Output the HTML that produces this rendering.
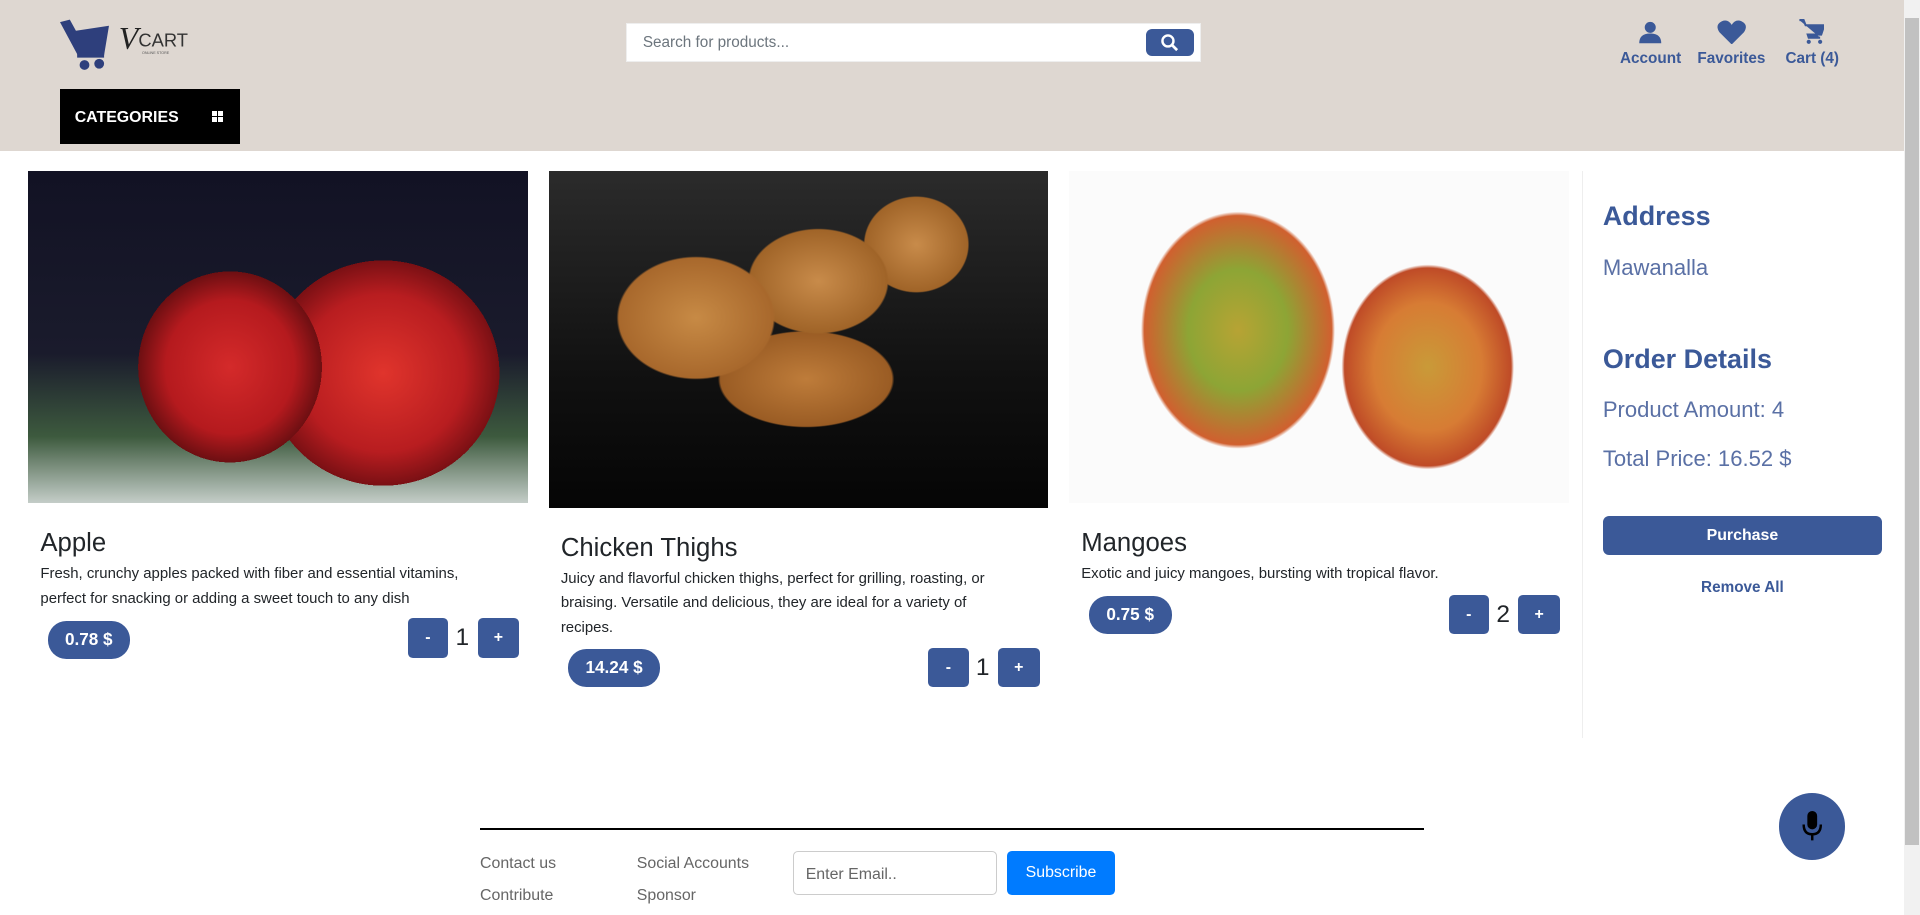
<!DOCTYPE html>
<html><head><meta charset="utf-8"><style>
html,body{margin:0;padding:0;}
body{width:1568px;height:747px;zoom:1.22449;position:relative;overflow:hidden;background:#fff;font-family:"Liberation Sans",sans-serif;color:#212529;}
.a{position:absolute;}
.blue{color:#3b5998;}
.hdr{left:0;top:0;width:1555px;height:123px;background:#ded7d1;}
.btn{background:#3b5998;color:#fff;border-radius:4px;text-align:center;font-weight:bold;}
.title{font-size:21px;}
.desc{font-size:12.2px;line-height:20px;}
.pill{background:#3b5998;color:#fff;font-weight:bold;font-size:14px;border-radius:15px;text-align:center;line-height:31px;height:31px;}
.q{width:33px;height:32px;line-height:32px;font-size:13px;}
.num{font-size:20px;}
.lab{font-size:12.5px;font-weight:bold;color:#3b5998;text-align:center;}
.foot{font-size:13px;color:#666;}
</style></head><body>
<div class="a hdr"></div>
<svg class="a" style="left:49px;top:13px" width="115" height="45" viewBox="0 0 115 45">
<path d="M0 5 L8 3 L13 12 L40 8 L36 32 L15 33 Z" fill="#2e3f7c"/>
<rect x="14" y="30" width="22" height="4" fill="#2e3f7c"/>
<circle cx="20" cy="40" r="4" fill="#2e3f7c"/><circle cx="32" cy="39" r="4" fill="#2e3f7c"/>
<text x="48" y="27" font-family="Liberation Serif" font-style="italic" font-size="26" fill="#222">V</text>
<text x="64" y="25" font-family="Liberation Sans" font-size="15" fill="#333">CART</text>
<text x="67" y="31" font-size="3" fill="#555">ONLINE STORE</text>
</svg>
<div class="a" style="left:511px;top:19px;width:470px;height:32px;background:#fff;border:1px solid #eee;box-sizing:border-box"></div>
<div class="a" style="left:525px;top:28px;font-size:12.5px;color:#6c757d">Search for products...</div>
<div class="a btn" style="left:936px;top:24px;width:39px;height:22px;border-radius:5px">
<svg width="16" height="16" viewBox="0 0 16 16" style="margin-top:3px"><circle cx="6.5" cy="6.5" r="4.5" stroke="#fff" stroke-width="2" fill="none"/><path d="M10 10 L14 14" stroke="#fff" stroke-width="2.2"/></svg></div>
<svg class="a" style="left:1338px;top:16px" width="20" height="20" viewBox="0 0 20 20"><circle cx="10" cy="6" r="4.5" fill="#3b5998"/><path d="M1 19 Q1 11 10 11 Q19 11 19 19 Z" fill="#3b5998"/></svg>
<svg class="a" style="left:1402px;top:16px" width="24" height="20" viewBox="0 0 24 20"><path d="M12 20 L2 10 Q-2 4 4 1 Q9 -1 12 4 Q15 -1 20 1 Q26 4 22 10 Z" fill="#3b5998"/></svg>
<svg class="a" style="left:1469px;top:15px" width="21" height="22" viewBox="0 0 24 26"><path d="M0 2 L4 2 L6 7 L24 7 L21 16 L8 16 L9 19 L20 19" stroke="#3b5998" stroke-width="2" fill="#3b5998"/><circle cx="9" cy="23" r="2" fill="#3b5998"/><circle cx="20" cy="23" r="2" fill="#3b5998"/></svg>
<div class="a lab" style="left:1310px;top:41px;width:76px">Account</div>
<div class="a lab" style="left:1378px;top:41px;width:72px">Favorites</div>
<div class="a lab" style="left:1450px;top:41px;width:60px">Cart (4)</div>
<div class="a" style="left:49px;top:73px;width:147px;height:45px;background:#000"></div>
<div class="a" style="left:61px;top:89px;color:#fff;font-weight:bold;font-size:13px">CATEGORIES</div>
<div class="a" style="left:173px;top:91px;width:9px;height:9px;background:linear-gradient(#000,#000) 4px 0/1px 9px no-repeat,linear-gradient(#000,#000) 0 4px/9px 1px no-repeat,#fff"></div>
<div class="a" style="left:23px;top:140px;width:408px;height:271px;background:
radial-gradient(ellipse 75px 78px at 165px 160px,#d42a2a 0,#b51a1e 70%,#6d0f12 100%,transparent 100%),
radial-gradient(ellipse 95px 92px at 290px 165px,#e0342c 0,#b81d20 70%,#7a1014 100%,transparent 100%),
linear-gradient(180deg,#121224 0,#1a1b2c 55%,#3d5a3e 80%,#c4cdc8 100%)"></div>
<div class="a" style="left:448px;top:140px;width:408px;height:275px;background:
radial-gradient(ellipse 90px 70px at 120px 120px,#c78a45 0,#a8682c 70%,transparent 72%),
radial-gradient(ellipse 80px 60px at 220px 90px,#c88b4a 0,#a06428 70%,transparent 72%),
radial-gradient(ellipse 100px 55px at 210px 170px,#be7c3a 0,#9a5c24 70%,transparent 72%),
radial-gradient(ellipse 60px 55px at 300px 60px,#c88b4a 0,#a06428 70%,transparent 72%),
linear-gradient(180deg,#2b2b2b 0,#111 60%,#050505 100%)"></div>
<div class="a" style="left:873px;top:140px;width:408px;height:271px;background:
radial-gradient(ellipse 90px 110px at 138px 130px,#b7a334 0,#8da535 45%,#d0602f 85%,transparent 88%),
radial-gradient(ellipse 80px 95px at 293px 160px,#c99a38 0,#d77c34 55%,#bf4b27 85%,transparent 88%),
#fbfbfb"></div>
<div class="a title" style="left:33px;top:432px">Apple</div>
<div class="a desc" style="left:33px;top:459px">Fresh, crunchy apples packed with fiber and essential vitamins,<br>perfect for snacking or adding a sweet touch to any dish</div>
<div class="a pill" style="left:39px;top:507px;width:67px">0.78 $</div>
<div class="a btn q" style="left:333px;top:505px">-</div><div class="a num" style="left:372px;top:510px">1</div><div class="a btn q" style="left:390px;top:505px;width:34px">+</div>
<div class="a title" style="left:458px;top:436px">Chicken Thighs</div>
<div class="a desc" style="left:458px;top:463px">Juicy and flavorful chicken thighs, perfect for grilling, roasting, or<br>braising. Versatile and delicious, they are ideal for a variety of<br>recipes.</div>
<div class="a pill" style="left:464px;top:530px;width:75px">14.24 $</div>
<div class="a btn q" style="left:758px;top:529px">-</div><div class="a num" style="left:797px;top:534px">1</div><div class="a btn q" style="left:815px;top:529px;width:34px">+</div>
<div class="a title" style="left:883px;top:432px">Mangoes</div>
<div class="a desc" style="left:883px;top:459px">Exotic and juicy mangoes, bursting with tropical flavor.</div>
<div class="a pill" style="left:889px;top:487px;width:68px">0.75 $</div>
<div class="a btn q" style="left:1183px;top:486px">-</div><div class="a num" style="left:1222px;top:491px">2</div><div class="a btn q" style="left:1240px;top:486px;width:34px">+</div>
<div class="a" style="left:1292px;top:140px;width:1px;height:463px;background:#eee"></div>
<div class="a blue" style="left:1309px;top:164px;font-size:22px;font-weight:bold">Address</div>
<div class="a" style="left:1309px;top:208px;font-size:18px;color:#5a70a5">Mawanalla</div>
<div class="a blue" style="left:1309px;top:281px;font-size:22px;font-weight:bold">Order Details</div>
<div class="a" style="left:1309px;top:324px;font-size:18px;color:#5a70a5">Product Amount: 4</div>
<div class="a" style="left:1309px;top:364px;font-size:18px;color:#5a70a5">Total Price: 16.52 $</div>
<div class="a btn" style="left:1309px;top:421px;width:228px;height:32px;line-height:32px;font-size:13px;border-radius:5px">Purchase</div>
<div class="a lab" style="left:1309px;top:473px;width:228px">Remove All</div>
<div class="a" style="left:392px;top:676px;width:771px;height:2px;background:#000"></div>
<div class="a foot" style="left:392px;top:698px">Contact us</div>
<div class="a foot" style="left:392px;top:724px">Contribute</div>
<div class="a foot" style="left:520px;top:698px">Social Accounts</div>
<div class="a foot" style="left:520px;top:724px">Sponsor</div>
<div class="a" style="left:648px;top:695px;width:166px;height:36px;border:1px solid #ccc;border-radius:4px;box-sizing:border-box"></div>
<div class="a" style="left:658px;top:707px;font-size:13px;color:#666">Enter Email..</div>
<div class="a" style="left:822px;top:695px;width:89px;height:36px;background:#007bff;border-radius:4px;color:#fff;font-size:13px;text-align:center;line-height:36px">Subscribe</div>
<div class="a" style="left:1453px;top:648px;width:54px;height:54px;border-radius:50%;background:#3b5998"></div>
<svg class="a" style="left:1470px;top:662px" width="20" height="26" viewBox="0 0 20 26"><rect x="6" y="0" width="8" height="15" rx="4" fill="#000"/><path d="M3 11 Q3 19 10 19 Q17 19 17 11" stroke="#000" stroke-width="2" fill="none"/><rect x="9" y="19" width="2" height="5" fill="#000"/></svg>
<div class="a" style="left:1555px;top:0;width:13px;height:747px;background:#f1f1f1"></div>
<div class="a" style="left:1556px;top:15px;width:11px;height:675px;background:#c1c1c1"></div>
</body></html>
